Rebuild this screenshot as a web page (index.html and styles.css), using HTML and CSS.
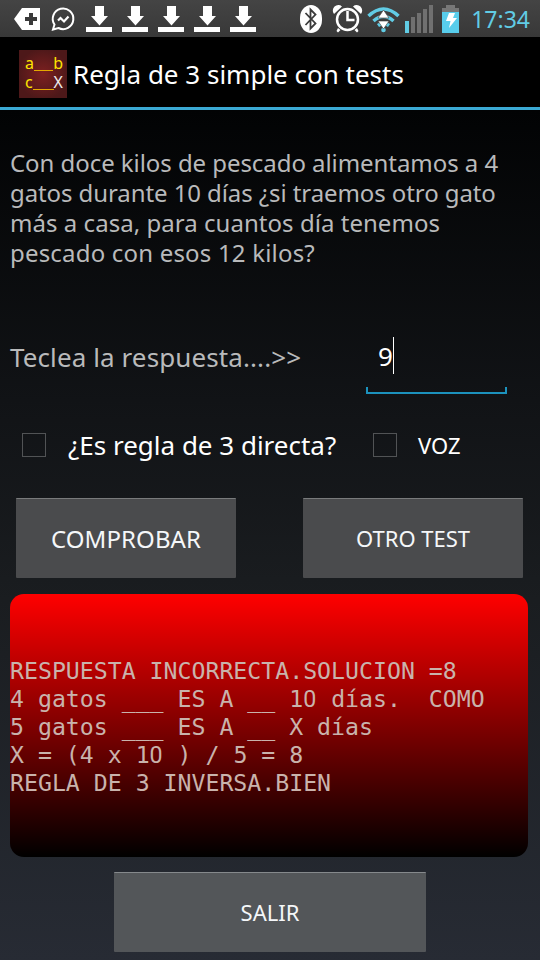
FILE: index.html
```html
<!DOCTYPE html>
<html lang="es">
<head>
<meta charset="utf-8">
<title>Regla de 3 simple con tests</title>
<link rel="stylesheet" href="styles.css">
</head>
<body>
<header class="status">
  <svg class="status-icons" width="540" height="37" viewBox="0 0 540 37">
    <defs>
      <g id="download"><path d="M9 6h9v10h4l-8.500 9.500L5 16h4zM0 27h26v5H0z" fill="#fff"/></g>
    </defs>
    <path d="M14 19l8-11h18v22H22z" fill="#fff"/>
    <path d="M29 13h4v4h4v4h-4v4h-4v-4h-4v-4h4z" fill="#3a3a3a"/>
    <path d="M54.500 24.500A10.300 10.300 0 1 1 58.500 28L53 29.500z" fill="none" stroke="#fff" stroke-width="2"/>
    <path d="M58 20.500l2.500-2.500 3.500 3.500 4.500-5" fill="none" stroke="#fff" stroke-width="2.200"/>
    <use href="#download" x="86"/><use href="#download" x="122"/><use href="#download" x="158"/><use href="#download" x="194"/><use href="#download" x="230"/>
    <rect x="300" y="5" width="22" height="28" rx="11" ry="13" fill="#fff"/>
    <path d="M305.500 13l10 10.500-5 5V9.500l5 5-10 10.500" fill="none" stroke="#3b3b3b" stroke-width="1.800"/>
    <circle cx="347.500" cy="19.500" r="10.500" fill="none" stroke="#fff" stroke-width="2.500"/>
    <path d="M347.500 11v9h7" fill="none" stroke="#fff" stroke-width="2.500"/>
    <path d="M334 14a5.500 5.500 0 0 1 8-7.500zM361 14a5.500 5.500 0 0 0-8-7.500zM338 28l2.500 2-2.500 2.500-1.500-1.500zM357 28l-2.500 2 2.500 2.500 1.500-1.500z" fill="#fff"/>
    <g fill="none" stroke="#61cce5" stroke-width="3.500">
      <path d="M368.500 16q15-14 30 0M373.500 21q10-9 20 0M378 25.500q5.500-4 11 0"/>
    </g>
    <circle cx="383.500" cy="30" r="2.300" fill="#61cce5"/>
    <path d="M383.500 10l5.500 8h-11zM378 21h11l-5.500 8z" fill="#fff" stroke="#3b3b3b" stroke-width=".6"/>
    <path d="M405 21h4v12h-4z" fill="#61cce5"/>
    <path d="M411 17h4v16h-4zM417 13h4v20h-4zM423 9h4v24h-4zM429 5h4v28h-4z" fill="#707070"/>
    <path d="M446 5h9v3h4v4h-17V8h4z" fill="#777"/>
    <path d="M442 12h17v21h-17z" fill="#58cdec"/>
    <path d="M449 13h6l-2 5h4l-8 10 1.500-7H446z" fill="#fff"/>
  </svg>
  <span class="clock">17:34</span>
</header>

<div class="title-bar">
  <div class="logo">
    <div class="logo-row">a<i></i>b</div>
    <div class="logo-row">c<i></i><b>X</b></div>
  </div>
  <h1>Regla de 3 simple con tests</h1>
</div>

<main>
  <p class="question"><span class="l1">Con doce kilos de pescado alimentamos a 4</span><br><span class="l2">gatos durante 10 días ¿si traemos otro gato</span><br><span class="l3">más a casa, para cuantos día tenemos</span><br><span class="l4">pescado con esos 12 kilos?</span></p>
  <div class="answer">
    <label class="prompt">Teclea la respuesta....&gt;&gt;</label>
    <div class="field"><span>9</span><i class="caret"></i></div>
  </div>
  <div class="checks">
    <i class="box"></i><span class="direct">¿Es regla de 3 directa?</span>
    <i class="box"></i><span class="voice">VOZ</span>
  </div>
  <div class="buttons">
    <button class="btn check">COMPROBAR</button>
    <button class="btn">OTRO TEST</button>
  </div>
  <div class="result">
    <div>RESPUESTA INCORRECTA.SOLUCION =8</div>
    <div>4 gatos ___ ES A __ 1<span class="zero">0</span> días.  COMO</div>
    <div>5 gatos ___ ES A __ X días</div>
    <div>X = (4 x 1<span class="zero">0</span> ) / 5 = 8</div>
    <div>REGLA DE 3 INVERSA.BIEN</div>
  </div>
  <button class="btn exit">SALIR</button>
</main>
</body>
</html>
```
FILE: styles.css
```css
* { box-sizing: border-box; }
body {
  margin: 0;
  width: 540px;
  height: 960px;
  overflow: hidden;
  background: linear-gradient(#000 0, #020304 110px, #111316 400px, #1a1d20 600px, #272b34 960px);
  font-family: "Noto Sans", sans-serif;
  color: #fff;
}
.status {
  display: grid;
  height: 37px;
  background: linear-gradient(#444, #383838);
}
.status > * { grid-area: 1 / 1; }
.clock {
  justify-self: end;
  padding-right: 10px;
  font-size: 23px;
  line-height: 39px;
  color: #61cce5;
}
.title-bar {
  display: flex;
  align-items: center;
  height: 73px;
  padding: 3px 0 0 19px;
  background: #000;
  border-bottom: 3px solid #3ba9d4;
}
.logo {
  width: 48px;
  height: 48px;
  padding: 4px 4px 0 6px;
  background: radial-gradient(circle, #7d2020, #4d1819 75%);
  color: #ffe600;
  font-size: 16px;
  line-height: 19px;
}
.logo-row { display: flex; }
.logo-row i { flex: 1; height: 17px; border-bottom: 1px solid #e5a900; }
.logo-row b { font-weight: 400; color: #eee; }
h1 {
  margin: 0 0 0 6px;
  font-size: 26px;
  font-weight: 400;
  line-height: 36px;
  white-space: nowrap;
}
main { display: flex; flex-direction: column; }
.question {
  margin: 38px 0 0 10px;
  font-size: 24px;
  line-height: 30px;
  white-space: nowrap;
  color: #b9babb;
}
.l1 { letter-spacing: -.06px; }
.l2 { letter-spacing: -.09px; }
.l3 { letter-spacing: .04px; }
.l4 { letter-spacing: .19px; }
.answer { display: flex; height: 126px; margin-top: 68px; padding-left: 10px; }
.prompt {
  width: 356px;
  font-size: 26px;
  line-height: 42px;
  letter-spacing: .1px;
  color: #b9babb;
}
.field {
  display: flex;
  width: 141px;
  height: 58px;
  padding-left: 12px;
  font-size: 26px;
  line-height: 40px;
  background:
    linear-gradient(#1c92bd, #1c92bd) bottom / 100% 2px no-repeat,
    linear-gradient(#1c92bd, #1c92bd) left bottom / 2px 7px no-repeat,
    linear-gradient(#1c92bd, #1c92bd) right bottom / 2px 7px no-repeat;
}
.caret { width: 1px; height: 37px; margin-top: 1px; background: #fff; }
.checks { display: flex; align-items: center; height: 36px; margin-top: -35px; padding-left: 22px; }
.box { flex: none; width: 24px; height: 24px; border: 1px solid #515355; }
.direct { width: 306px; margin-left: 21px; font-size: 26px; padding-left: 1px; white-space: nowrap; }
.voice { margin-left: 21px; font-size: 22px; }
.buttons { display: flex; justify-content: space-between; margin: 35px 17px 0 16px; }
.btn {
  width: 220px;
  height: 80px;
  padding: 0 0 1px;
  border: 0;
  border-top: 1px solid #797b7c;
  border-radius: 1px;
  background: #4a4b4d;
  color: #f5f7f9;
  font: 22px "Noto Sans", sans-serif;
}
.check { font-size: 24px; letter-spacing: .1px; }
.result {
  height: 263px;
  margin: 16px 12px 0 10px;
  padding-top: 63px;
  border-radius: 14px;
  background: linear-gradient(#f00, #000);
  color: #c9b3ac;
  font: 23.200px/28px "DejaVu Sans Mono", monospace;
}
.result div { height: 28px; white-space: pre; }
.zero { display: inline-block; width: 14px; font-family: Roboto, sans-serif; line-height: 20px; }
.exit { width: 312px; margin: 15px 0 0 114px; background: #535659; border-top-color: #85898c; }
```
